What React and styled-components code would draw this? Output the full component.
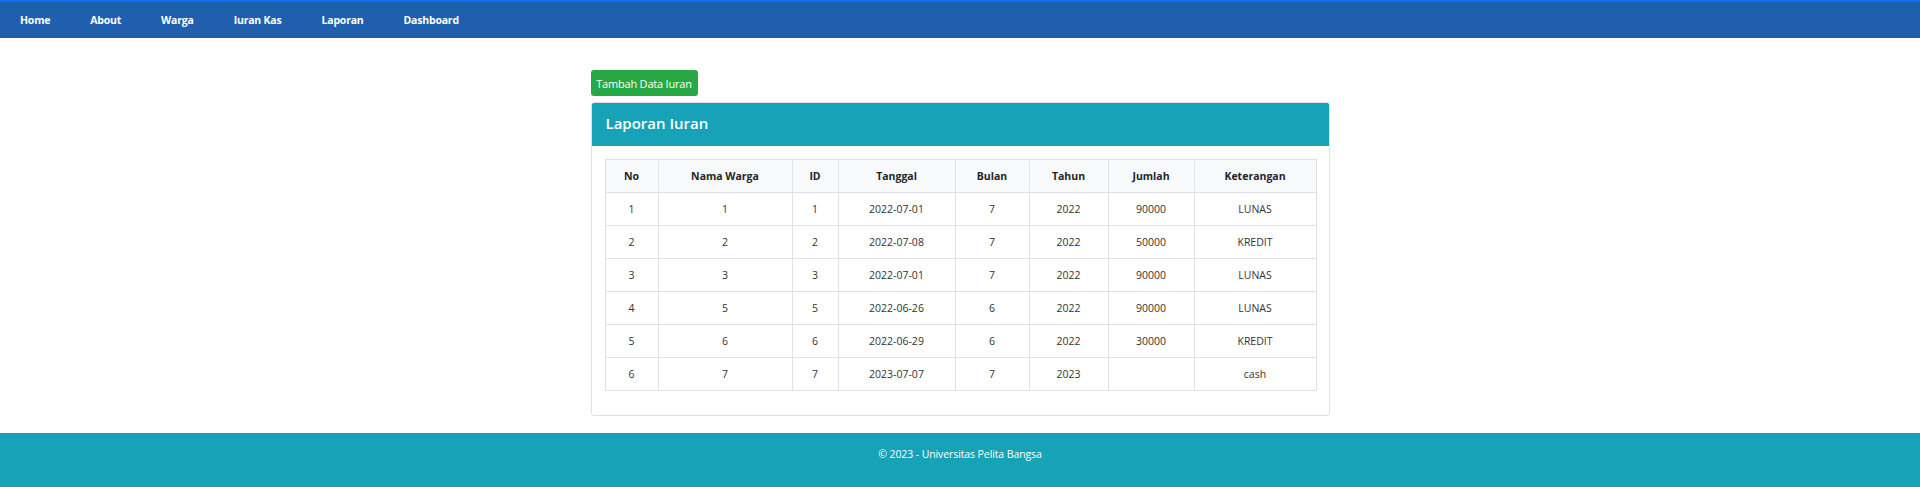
import React from 'react';
import styled, { createGlobalStyle } from 'styled-components';

const GlobalStyle = createGlobalStyle`
	body {
		margin: 0;
		font-family: 'Open Sans', 'Noto Sans', sans-serif;
		color: #212529;
		background: #fff;
	}
`;

const Page = styled.div`
	display: flex;
	flex-direction: column;
	min-height: 487px;
`;

const Navbar = styled.nav`
	display: flex;
	align-items: center;
	gap: 40px;
	height: 36px;
	padding-left: 20px;
	background: #1f5fad;
	border-top: 2px solid #0d6efd;
	a {
		color: #fff;
		font-size: 10.5px;
		font-weight: 700;
		text-decoration: none;
		letter-spacing: -0.2px;
	}
`;

const Main = styled.main`
	flex: 1;
	width: 739px;
	margin: 0 auto;
	padding-top: 32px;
	padding-bottom: 16px;
`;

const AddButton = styled.button`
	display: block;
	height: 26px;
	width: 107px;
	padding: 0;
	margin-bottom: 6px;
	border: none;
	border-radius: 3px;
	background: #28a745;
	color: #fff;
	font-family: inherit;
	font-size: 11px;
	letter-spacing: -0.2px;
`;

const Card = styled.section`
	border: 1px solid #dfe2e5;
	border-radius: 3px;
	overflow: hidden;
`;

const CardHeader = styled.header`
	height: 43px;
	box-sizing: border-box;
	display: flex;
	align-items: center;
	padding: 0 0 4px 14px;
	background: #17a2b8;
	color: #fff;
	font-size: 15px;
	font-weight: 600;
`;

const CardBody = styled.div`
	padding: 13px 13px 24px 13px;
`;

const Table = styled.table`
	width: 711px;
	border-collapse: collapse;
	table-layout: fixed;
	font-size: 10.5px;
	th, td {
		height: 32px;
		padding: 0;
		border: 1px solid #dee2e6;
		text-align: center;
		vertical-align: middle;
	}
	th {
		background: #f8f9fa;
		font-weight: 700;
	}
	td {
		color: #333;
	}
`;

const Footer = styled.footer`
	height: 54px;
	box-sizing: border-box;
	padding-top: 14px;
	text-align: center;
	background: #17a2b8;
	color: #fff;
	font-size: 10.5px;
	letter-spacing: -0.1px;
`;

const columns = [
	['No', 53],
	['Nama Warga', 134],
	['ID', 46],
	['Tanggal', 117],
	['Bulan', 74],
	['Tahun', 79],
	['Jumlah', 86],
	['Keterangan', 122],
];

const rows = [
	[1, 1, 1, '2022-07-01', 7, 2022, 90000, 'LUNAS'],
	[2, 2, 2, '2022-07-08', 7, 2022, 50000, 'KREDIT'],
	[3, 3, 3, '2022-07-01', 7, 2022, 90000, 'LUNAS'],
	[4, 5, 5, '2022-06-26', 6, 2022, 90000, 'LUNAS'],
	[5, 6, 6, '2022-06-29', 6, 2022, 30000, 'KREDIT'],
	[6, 7, 7, '2023-07-07', 7, 2023, '', 'cash'],
];

export default function App() {
	return (
		<Page>
			<GlobalStyle />
			<Navbar>
				<a href="#">Home</a>
				<a href="#">About</a>
				<a href="#">Warga</a>
				<a href="#">Iuran Kas</a>
				<a href="#">Laporan</a>
				<a href="#">Dashboard</a>
			</Navbar>
			<Main>
				<AddButton>Tambah Data Iuran</AddButton>
				<Card>
					<CardHeader>Laporan Iuran</CardHeader>
					<CardBody>
						<Table>
							<colgroup>
								{columns.map(([name, w]) => (
									<col key={name} style={{ width: w }} />
								))}
							</colgroup>
							<thead>
								<tr>
									{columns.map(([name]) => (
										<th key={name}>{name}</th>
									))}
								</tr>
							</thead>
							<tbody>
								{rows.map((r) => (
									<tr key={r[0]}>
										{r.map((v, i) => (
											<td key={i}>{v}</td>
										))}
									</tr>
								))}
							</tbody>
						</Table>
					</CardBody>
				</Card>
			</Main>
			<Footer>© 2023 - Universitas Pelita Bangsa</Footer>
		</Page>
	);
}
